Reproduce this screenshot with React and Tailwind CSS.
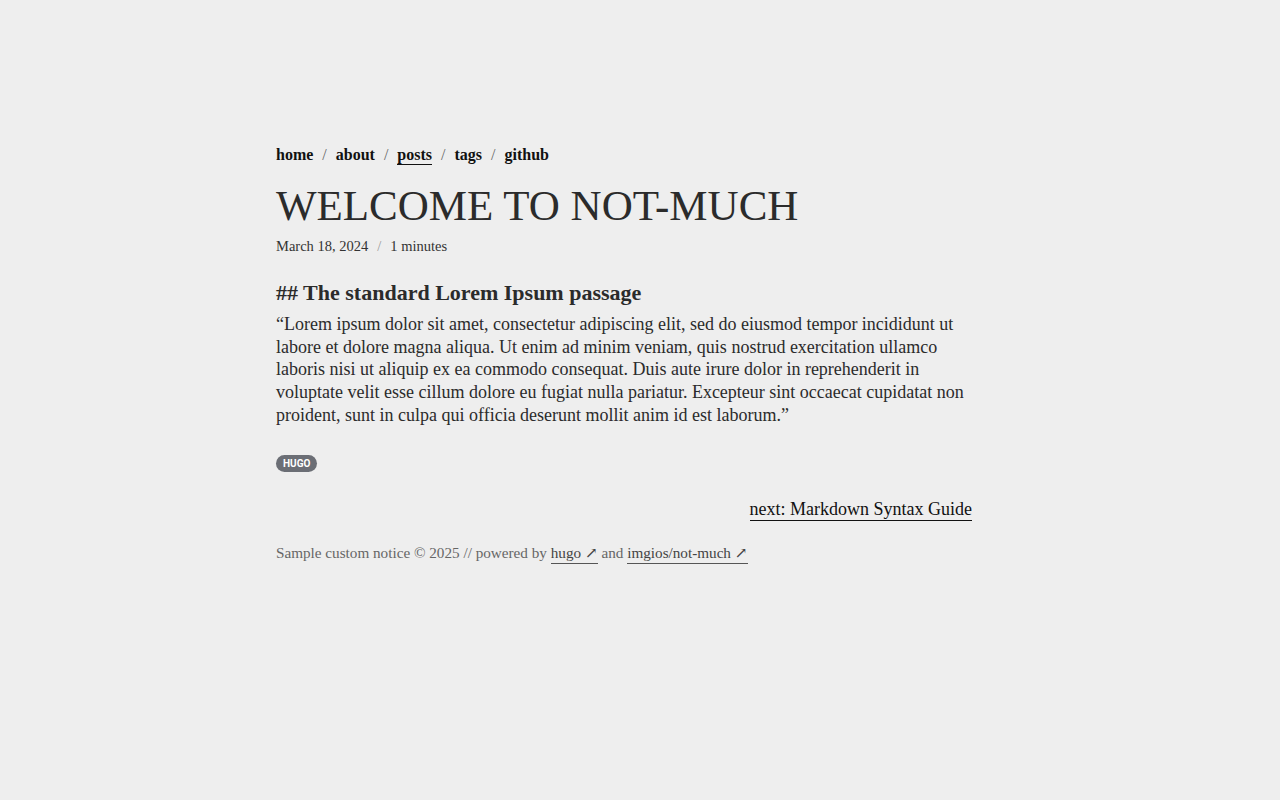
export default function App() {
  const serif = { fontFamily: '"Liberation Serif", "DejaVu Serif", serif' }
  return (
    <div className="min-h-screen bg-[#eeeeee] text-[#2b2b2b]" style={serif}>
      <div className="mx-auto max-w-[728px] pt-[143px] pr-8">
        {/* Nav */}
        <nav className="flex items-center gap-[9px] text-[16px] font-bold text-[#111]">
          <a className="leading-[20px]">home</a>
          <span className="text-[#666] font-normal">/</span>
          <a className="leading-[20px]">about</a>
          <span className="text-[#666] font-normal">/</span>
          <a className="leading-[19px] border-b border-[#111]">posts</a>
          <span className="text-[#666] font-normal">/</span>
          <a className="leading-[20px]">tags</a>
          <span className="text-[#666] font-normal">/</span>
          <a className="leading-[20px]">github</a>
        </nav>

        <h1 className="mt-[14px] text-[43px] leading-[50px] uppercase text-[#2b2b2b]">
          Welcome to not-much
        </h1>
        <div className="mt-[5px] flex items-center gap-[9px] text-[14.5px] text-[#333]">
          <span>March 18, 2024</span>
          <span className="text-[#999]">/</span>
          <span>1 minutes</span>
        </div>

        <h2 className="mt-[21px] text-[22px] font-bold leading-[28px]">## The standard Lorem Ipsum passage</h2>
        <p className="mt-[6px] text-[18px] leading-[22.75px] text-[#2b2b2b]">
          “Lorem ipsum dolor sit amet, consectetur adipiscing elit, sed do eiusmod tempor incididunt ut labore et dolore
          magna aliqua. Ut enim ad minim veniam, quis nostrud exercitation ullamco laboris nisi ut aliquip ex ea commodo
          consequat. Duis aute irure dolor in reprehenderit in voluptate velit esse cillum dolore eu fugiat nulla pariatur.
          Excepteur sint occaecat cupidatat non proident, sunt in culpa qui officia deserunt mollit anim id est laborum.”
        </p>

        <div className="mt-[28px] flex">
          <span
            className="rounded-full bg-[#6b6e75] px-[7px] h-[17px] leading-[17px] text-[10px] font-bold text-white"
            style={{ fontFamily: 'Roboto, "Liberation Sans", sans-serif' }}
          >
            HUGO
          </span>
        </div>

        <div className="mt-[27px] flex justify-end">
          <a className="text-[18px] leading-[21px] text-[#111] border-b border-[#111]">next: Markdown Syntax Guide</a>
        </div>

        <footer className="mt-[21px] text-[15.2px] text-[#666]">
          Sample custom notice © 2025 // powered by{' '}
          <a className="pb-[2px] border-b border-[#555] text-[#444]">hugo ↗</a> and{' '}
          <a className="pb-[2px] border-b border-[#555] text-[#444]">imgios/not-much ↗</a>
        </footer>
      </div>
    </div>
  )
}
